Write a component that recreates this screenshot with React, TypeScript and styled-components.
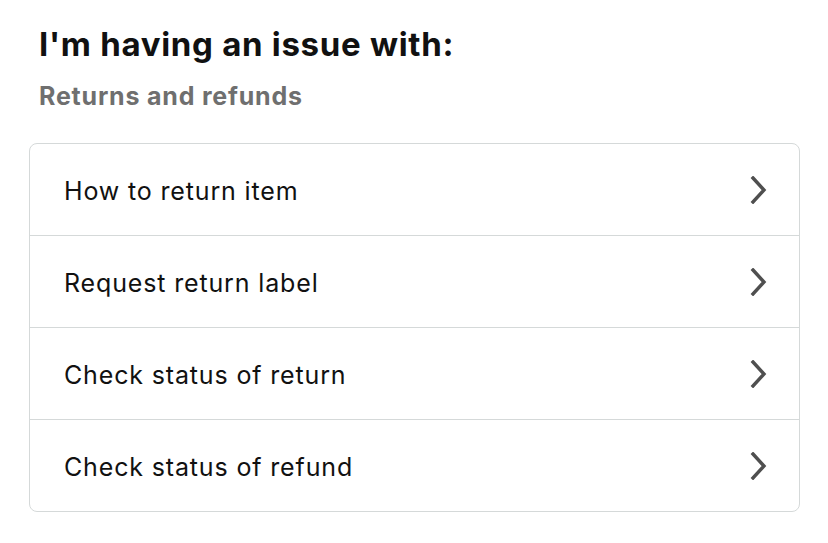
import React from "react";
import styled, { createGlobalStyle } from "styled-components";

const Global = createGlobalStyle`
  html, body { margin: 0; padding: 0; background: #ffffff; }
  body { font-family: Inter, "Open Sans", sans-serif; color: #0f1111; }
`;

const Page = styled.div`
  padding: 23px 29px 0 29px;
  width: 828px;
  box-sizing: border-box;
`;

const Title = styled.h1`
  margin: 0 0 0 10px;
  font-size: 33px;
  line-height: 42px;
  font-weight: 700;
  letter-spacing: 0.7px;
  color: #111111;
`;

const Subtitle = styled.h2`
  margin: 15px 0 0 10px;
  font-size: 25px;
  line-height: 32px;
  font-weight: 700;
  letter-spacing: 0.8px;
  color: #6f6f6f;
`;

const Card = styled.div`
  margin-top: 31px;
  width: 769px;
  border: 1px solid #d5d9d9;
  border-radius: 8px;
  overflow: hidden;
  display: flex;
  flex-direction: column;
`;

const Row = styled.div`
  height: 91px;
  display: flex;
  align-items: center;
  justify-content: space-between;
  padding: 0 31px 0 34px;
  font-size: 25px;
  letter-spacing: 0.85px;
  color: #111111;
  & + & { border-top: 1px solid #d5d9d9; }
`;

const Label = styled.span`
  padding-top: 3px;
`;

const Chevron = () => (
  <svg width="18" height="28" viewBox="0 0 18 28" fill="none">
    <path d="M3 2 L14 14 L3 26" stroke="#4f4f4f" strokeWidth="3.4" strokeLinecap="square" strokeLinejoin="miter" />
  </svg>
);

const items = [
  "How to return item",
  "Request return label",
  "Check status of return",
  "Check status of refund",
];

export default function App() {
  return (
    <>
      <Global />
      <Page>
        <Title>I'm having an issue with:</Title>
        <Subtitle>Returns and refunds</Subtitle>
        <Card>
          {items.map((t) => (
            <Row key={t}>
              <Label>{t}</Label>
              <Chevron />
            </Row>
          ))}
        </Card>
      </Page>
    </>
  );
}
